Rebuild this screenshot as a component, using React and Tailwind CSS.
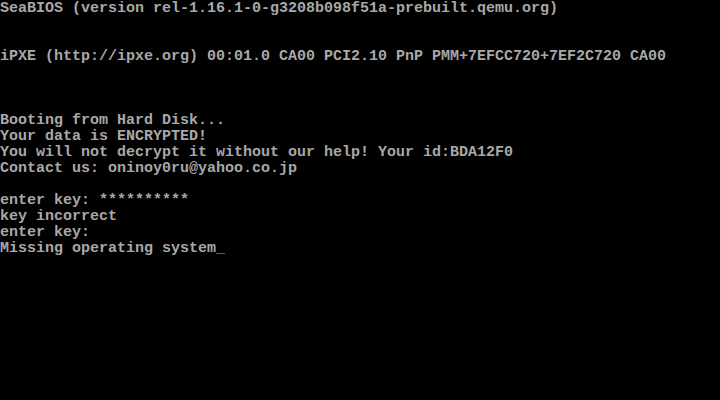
export default function App() {
  const lines = [
    "SeaBIOS (version rel-1.16.1-0-g3208b098f51a-prebuilt.qemu.org)",
    "",
    "",
    "iPXE (http://ipxe.org) 00:01.0 CA00 PCI2.10 PnP PMM+7EFCC720+7EF2C720 CA00",
    "",
    "",
    "",
    "Booting from Hard Disk...",
    "Your data is ENCRYPTED!",
    "You will not decrypt it without our help! Your id:BDA12F0",
    "Contact us: oninoy0ru@yahoo.co.jp",
    "",
    "enter key: **********",
    "key incorrect",
    "enter key:",
    "Missing operating system_",
  ];
  return (
    <div className="w-[720px] h-[400px] bg-black overflow-hidden pt-[1px] text-[#a8a8a8] font-['Liberation_Mono',monospace] font-bold text-[15px] leading-[16px]">
      {lines.map((l, i) => (
        <div key={i} className="h-[16px] whitespace-pre">{l}</div>
      ))}
    </div>
  );
}
